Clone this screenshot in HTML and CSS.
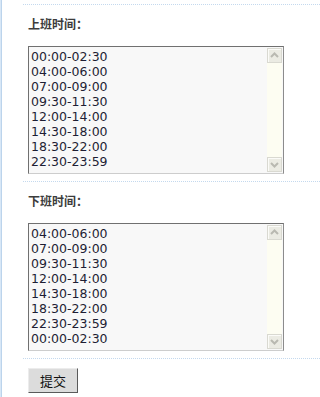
FILE: index.html
```html
<!DOCTYPE html>
<html lang="zh-CN">
<head>
<meta charset="utf-8">
<title>上下班时间</title>
<link rel="stylesheet" href="styles.css">
</head>
<body>
<div class="page">
  <div class="row">
    <div class="label">上班时间：</div>
    <div class="box">
      <textarea class="times" readonly wrap="off">00:00-02:30
04:00-06:00
07:00-09:00
09:30-11:30
12:00-14:00
14:30-18:00
18:30-22:00
22:30-23:59</textarea>
      <div class="sb">
        <span class="sb-btn"><svg width="13" height="13" viewBox="0 0 13 13"><polyline points="3,8 6.5,4.5 10,8" fill="none" stroke="#b9b9b1" stroke-width="2"/></svg></span>
        <span class="sb-track"></span>
        <span class="sb-btn"><svg width="13" height="13" viewBox="0 0 13 13"><polyline points="3,5 6.5,8.5 10,5" fill="none" stroke="#b9b9b1" stroke-width="2"/></svg></span>
      </div>
    </div>
  </div>
  <div class="row">
    <div class="label">下班时间：</div>
    <div class="box">
      <textarea class="times" readonly wrap="off">04:00-06:00
07:00-09:00
09:30-11:30
12:00-14:00
14:30-18:00
18:30-22:00
22:30-23:59
00:00-02:30</textarea>
      <div class="sb">
        <span class="sb-btn"><svg width="13" height="13" viewBox="0 0 13 13"><polyline points="3,8 6.5,4.5 10,8" fill="none" stroke="#b9b9b1" stroke-width="2"/></svg></span>
        <span class="sb-track"></span>
        <span class="sb-btn"><svg width="13" height="13" viewBox="0 0 13 13"><polyline points="3,5 6.5,8.5 10,5" fill="none" stroke="#b9b9b1" stroke-width="2"/></svg></span>
      </div>
    </div>
  </div>
  <div class="row row-submit">
    <button class="submit" type="button">提交</button>
  </div>
</div>
</body>
</html>
```
FILE: styles.css
```css
html, body {
  margin: 0;
  padding: 0;
  height: 100%;
  background: #fff;
}
body {
  font-family: "Noto Sans CJK SC", "DejaVu Sans", sans-serif;
}
.page {
  box-sizing: border-box;
  min-height: 100vh;
  border-left: 1px solid #d8e7f6;
  box-shadow: inset 1px 0 0 #bcd4ec;
  padding: 4px 0 0 22px;
}
.row {
  border-top: 1px dotted #c4d9ee;
  padding: 11px 0 7px 5px;
}
.label {
  font-size: 12px;
  line-height: 16px;
  font-weight: bold;
  color: #3c3c3c;
  margin-bottom: 14px;
}
.box {
  box-sizing: border-box;
  width: 256px;
  height: 128px;
  display: flex;
  background: #f8f8f8;
  border: 1px solid;
  border-color: #707070 #8c8c8c #cdcdcd #707070;
}
.times {
  flex: 1;
  min-width: 0;
  margin: 0;
  border: 0;
  padding: 2px 2px 0 2px;
  background: transparent;
  resize: none;
  overflow: hidden;
  outline: none;
  font-family: "DejaVu Sans", Verdana, sans-serif;
  font-size: 12.5px;
  line-height: 15px;
  color: #1e1e34;
}
.sb {
  width: 15px;
  margin: 1px 1px 1px 0;
  display: flex;
  flex-direction: column;
  background: #fdfdf2;
}
.sb-btn {
  box-sizing: border-box;
  width: 15px;
  height: 15px;
  display: flex;
  align-items: center;
  justify-content: center;
  background: #ebebe3;
  border: 1px solid #d9d9d1;
  box-shadow: inset 1px 1px 0 #fbfbf8;
}
.sb-track {
  flex: 1;
}
.row-submit {
  padding: 8px 0 0 5px;
}
.submit {
  box-sizing: border-box;
  width: 50px;
  height: 25px;
  margin: 0;
  padding: 0;
  background: #dcdcdc;
  border: 1px solid;
  border-color: #ececec #5a5a5a #5a5a5a #ececec;
  font-family: "Noto Sans CJK SC", sans-serif;
  font-size: 13px;
  color: #111;
}
```
